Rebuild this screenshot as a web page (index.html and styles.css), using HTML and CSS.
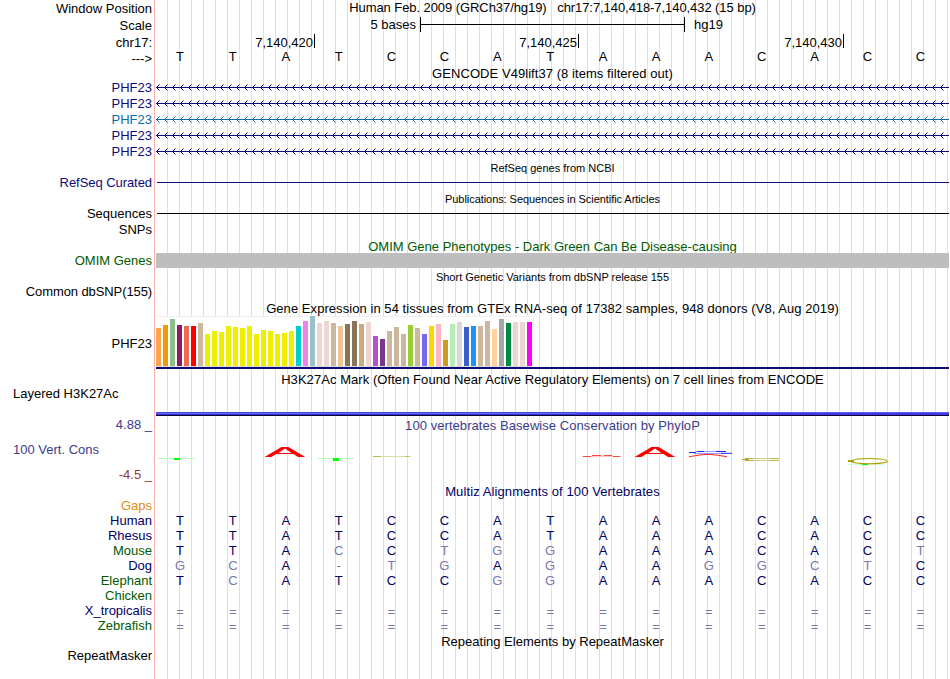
FILE: index.html
```html
<!DOCTYPE html>
<html lang="en">
<head>
<meta charset="utf-8">
<title>Genome Browser</title>
<link rel="stylesheet" href="styles.css">
</head>
<body>
<main class="browser">
  <div class="row h17"><div class="label down1">Window Position</div><div class="title pre">Human Feb. 2009 (GRCh37/hg19)   chr17:7,140,418-7,140,432 (15 bp)</div></div>
  <div class="row h17"><div class="label down1">Scale</div><div class="scale"><span class="scale-text">5 bases</span><span class="scale-bar"></span><span>hg19</span></div></div>
  <div class="row h15"><div class="label down1">chr17:</div><div class="ruler"><span>7,140,420</span><span>7,140,425</span><span>7,140,430</span></div></div>
  <div class="row h17"><div class="label down2">---&gt;</div><div class="bases black" data-seq="TTATCCATAAACACC"></div></div>
  <div class="row h14"><div class="label"></div><div class="title wide">GENCODE V49lift37 (8 items filtered out)</div></div>
  <div class="row h16 navy"><div class="label">PHF23</div><div class="intron"></div></div>
  <div class="row h16 navy"><div class="label">PHF23</div><div class="intron"></div></div>
  <div class="row h16 teal"><div class="label">PHF23</div><div class="intron"></div></div>
  <div class="row h16 navy"><div class="label">PHF23</div><div class="intron"></div></div>
  <div class="row h16 navy"><div class="label">PHF23</div><div class="intron"></div></div>
  <div class="row h15"><div class="label"></div><div class="title small">RefSeq genes from NCBI</div></div>
  <div class="row h16 navy"><div class="label narrow">RefSeq Curated</div><div class="line"></div></div>
  <div class="row h15"><div class="label"></div><div class="title small narrow">Publications: Sequences in Scientific Articles</div></div>
  <div class="row h16"><div class="label">Sequences</div><div class="line"></div></div>
  <div class="row h17"><div class="label">SNPs</div></div>
  <div class="row h14 green"><div class="label"></div><div class="title">OMIM Gene Phenotypes - Dark Green Can Be Disease-causing</div></div>
  <div class="row h16 green"><div class="label">OMIM Genes</div><div class="omim"></div></div>
  <div class="row h15"><div class="label"></div><div class="title small">Short Genetic Variants from dbSNP release 155</div></div>
  <div class="row h17"><div class="label narrower">Common dbSNP(155)</div></div>
  <div class="row h15"><div class="label"></div><div class="title wide">Gene Expression in 54 tissues from GTEx RNA-seq of 17382 samples, 948 donors (V8, Aug 2019)</div></div>
  <div class="row gtex"><div class="label">PHF23</div><div class="expression"><div class="bars" id="bars"></div></div></div>
  <div class="row h14"><div class="label"></div><div class="title wide">H3K27Ac Mark (Often Found Near Active Regulatory Elements) on 7 cell lines from ENCODE</div></div>
  <div class="row h26"><div class="label left">Layered H3K27Ac</div></div>
  <div class="row h5"><div class="label"></div><div class="signal"><i></i><i></i></div></div>
  <div class="row h25 blue"><div class="label">4.88 _</div><div class="title down1 wide">100 vertebrates Basewise Conservation by PhyloP</div></div>
  <div class="row h25 blue"><div class="label left">100 Vert. Cons</div>
    <svg class="logo" viewBox="156 442 793 25" width="793" height="25">
      <path d="M158 458.5H195" stroke="#b4ffb4"/><path d="M174 458h6v2h-6z" fill="#0f0"/>
      <path d="M317 458.5H354" stroke="#b4ffb4"/><path d="M333 458h6v3h-6z" fill="#0f0"/>
      <path id="a" fill="#f00" fill-rule="evenodd" d="M264.500 457L281.500 447H288.500L305.300 457H298L293.500 454H276L271.500 457ZM278.500 453H291.500L285 448.500Z"/>
      <use href="#a" x="370"/>
      <path d="M373 456.500H411" stroke="#dcdca8"/><path d="M373 456.500H381M405 456.500H409" stroke="#bcbc50"/>
      <path d="M582 456.500H622" stroke="#ffc8c8"/><path d="M583 456.500H591M613 456.500H620M592 455.500H601M604 455.500H612" stroke="#f44"/>
      <path d="M696 451.500H726M694 453.500H722" stroke="#99f"/>
      <path d="M689 452.500H696M721 453.300H732M697 451.500H704M716 451.500H726" stroke="#22f"/>
      <path d="M689 456.700L700 455Q708 453.500 716 455L727 456.700" fill="none" stroke="#f22"/>
      <path d="M747 458.500H779M747 460.500H779" stroke="#d0cc88"/><path d="M745 458.500H754M770 458.500H779M745 460.500H754M770 460.500H779" stroke="#b8b448"/>
      <path d="M742 459.500H749" stroke="#aca020"/>
      <path d="M847 464.500H885" stroke="#d4ffd4"/>
      <path d="M887 460.500Q882 458.500 869 458.500Q856 458.500 852 460.500V462Q856 463.700 869 463.700Q884 463.700 888 461.500" fill="none" stroke="#a8a000" stroke-width="1.100"/>
      <path d="M848 461H854" stroke="#a8a000" stroke-width="2"/><path d="M862 464.500H868" stroke="#0f0"/>
    </svg></div>
  <div class="row h17 maroon"><div class="label">-4.5 _</div></div>
  <div class="row h14 deep"><div class="label"></div><div class="title wider">Multiz Alignments of 100 Vertebrates</div></div>
  <div class="row h15 orange"><div class="label">Gaps</div></div>
  <div class="row h15 deep"><div class="label">Human</div><div class="bases" data-seq="TTATCCATAAACACC"></div></div>
  <div class="row h15 deep"><div class="label">Rhesus</div><div class="bases" data-seq="TTATCCATAAACACC"></div></div>
  <div class="row h15 green"><div class="label">Mouse</div><div class="bases" data-seq="TTAcCtggAAACACt"></div></div>
  <div class="row h15 deep"><div class="label">Dog</div><div class="bases" data-seq="gcA-tgAgAAggctC"></div></div>
  <div class="row h15 green"><div class="label">Elephant</div><div class="bases" data-seq="TcATCCggAAACACC"></div></div>
  <div class="row h15 green"><div class="label">Chicken</div></div>
  <div class="row h15 deep"><div class="label">X_tropicalis</div><div class="bases gap" data-seq="==============="></div></div>
  <div class="row h16 green"><div class="label">Zebrafish</div><div class="bases gap" data-seq="==============="></div></div>
  <div class="row h14"><div class="label"></div><div class="title">Repeating Elements by RepeatMasker</div></div>
  <div class="row h15"><div class="label">RepeatMasker</div></div>
</main>
<script src="tracks.js"></script>
</body>
</html>
```
FILE: styles.css
```css
* { box-sizing: border-box; }
body { margin: 0; background: #fff; }
.browser {
  width: 949px; height: 679px; overflow: hidden; color: #000;
  font: 13px/15px "Liberation Sans", Arial, sans-serif;
  background:
    linear-gradient(#ffb4b4, #ffb4b4) 154px 0 / 1px 100% no-repeat,
    repeating-linear-gradient(90deg, #dcdcf8 0 1px, transparent 1px 12px) 167px 0 / 782px 100% no-repeat;
}
.row { display: grid; grid-template-columns: 152px 793px; column-gap: 4px; }
.h5 { height: 5px; } .h14 { height: 14px; } .h15 { height: 15px; } .h16 { height: 16px; }
.h17 { height: 17px; } .h25 { height: 25px; } .h26 { height: 26px; }
.label { text-align: right; white-space: nowrap; }
.label.left { text-align: left; padding-left: 13px; }
.title { text-align: center; white-space: nowrap; }
.pre { white-space: pre; letter-spacing: -.07px; }
.wide { letter-spacing: .06px; }
.wider { letter-spacing: .1px; }
.narrow { letter-spacing: -.06px; }
.narrower { letter-spacing: -.1px; }
.small { font-size: 11px; padding-top: 1px; line-height: 15px; }
.down1 { padding-top: 1px; }
.down2 { padding-top: 2px; }
.navy { color: #0c0c78; } .teal { color: #0c6cac; } .green { color: #005a00; }
.blue { color: #3c3c8c; } .maroon { color: #8c3c3c; } .orange { color: #e08c14; } .deep { color: #000064; }

.scale { display: grid; grid-template-columns: 260px 265px auto; column-gap: 4px; }
.scale-text { text-align: right; }
.scale-bar {
  height: 15px; border: solid #000; border-width: 0 1px;
  background: linear-gradient(#000, #000) 0 7px / 100% 1px no-repeat;
}
.scale span:last-child { padding-left: 5px; }
.ruler { display: grid; grid-template-columns: 159px 264px 265px; }
.ruler span { text-align: right; border-right: 1px solid #000; padding: 1px 1px 0 0; height: 14px; }

.bases { display: grid; grid-template-columns: repeat(15, 52.9px); margin-left: -2.500px; text-align: center; color: #000064; }
.bases.black { color: #000; }
.bases.gap { padding-top: 1px; }
.bases .diff { color: #7878ac; }

.intron { height: 15px; }
.intron svg { display: block; }
.line { height: 1px; margin: 7px 0 0 1px; background: currentColor; }
.omim { height: 15px; background: #bebebe; }

.gtex { height: 56px; }
.gtex .label { padding-top: 20px; }
.expression { height: 53px; border-bottom: 2px solid #0c0c78; }
.bars {
  display: flex; align-items: flex-end; gap: 2px; width: 378px; height: 51px;
  background: #fff; padding-bottom: 1px;
  box-shadow: inset -1px 1px #f0f0f0, inset 0 -1px #dcdcdc;
}
.bars i { flex: 0 0 5px; }

.signal { display: grid; grid-template-columns: 422px 371px; }
.signal i { height: 4px; background: linear-gradient(#4646dc 0 1px, #5a6eff 1px 2px, #3232c8 2px 3px, #14003c 3px 4px); }
.signal i + i { background: linear-gradient(#5a5aff 0 1px, #3c3cdc 1px 3px, #14003c 3px 4px); }
.logo { display: block; }
```
FILE: tracks.js
```js
// Bases: lower case marks a base that differs from the reference genome.
document.querySelectorAll('.bases').forEach(function (row) {
  for (const base of row.dataset.seq) {
    const cell = document.createElement('span');
    cell.textContent = base.toUpperCase();
    if (!/[A-Z]/.test(base)) cell.className = 'diff';
    row.append(cell);
  }
});

// Strand arrows along each intron.
document.querySelectorAll('.intron').forEach(function (el) {
  let d = '';
  let faint = '';
  for (let x = 0; x < 793; x += 8) {
    d += `M${x + 1} 6h1v1h-1zM${x + 1} 8h1v1h-1zM${x + 2} 5h1v1h-1zM${x + 2} 9h1v1h-1z`;
    faint += `M${x + 3} 4h1v1h-1zM${x + 3} 10h1v1h-1z`;
  }
  el.innerHTML = `<svg width="793" height="15" fill="currentColor"><path d="M0 7h793v1H0z${d}"/><path opacity=".5" d="${faint}"/></svg>`;
});

// Median expression per tissue: bar height and colour.
const tissues = [
  [38, '#ffa54f'], [41, '#ee9a00'], [47, '#8fbc8f'], [41, '#8b1c62'], [40, '#ee6a50'], [40, '#ff0000'], [43, '#cdb79e'],
  [32, '#eeee00'], [35, '#eeee00'], [34, '#eeee00'], [40, '#eeee00'], [39, '#eeee00'], [38, '#eeee00'], [40, '#eeee00'],
  [32, '#eeee00'], [36, '#eeee00'], [35, '#eeee00'], [32, '#eeee00'], [33, '#eeee00'], [35, '#eeee00'],
  [40, '#00cdcd'], [45, '#ee82ee'], [50, '#9ac0cd'], [43, '#eed5d2'], [45, '#eed5d2'], [43, '#cdb79e'], [40, '#eec591'],
  [42, '#8b7355'], [45, '#8b7355'], [42, '#cdaa7d'], [44, '#eed5d2'], [30, '#b452cd'], [27, '#7a378b'], [35, '#cdb79e'],
  [39, '#cdb79e'], [32, '#cdb79e'], [41, '#9acd32'], [38, '#cdb79e'], [32, '#7a67ee'], [40, '#ffd700'], [42, '#ffb6c1'],
  [26, '#cd9b1d'], [42, '#b4eeb4'], [44, '#d9d9d9'], [39, '#3a5fcd'], [40, '#1e90ff'], [40, '#cdb79e'], [45, '#cdb79e'],
  [37, '#ffd39b'], [47, '#a6a6a6'], [43, '#008b45'], [44, '#eed5d2'], [44, '#eed5d2'], [44, '#ff00ff']
];
const bars = document.getElementById('bars');
for (const [height, colour] of tissues) {
  const bar = document.createElement('i');
  bar.style.cssText = `height:${height}px;background:${colour}`;
  bars.append(bar);
}
```
